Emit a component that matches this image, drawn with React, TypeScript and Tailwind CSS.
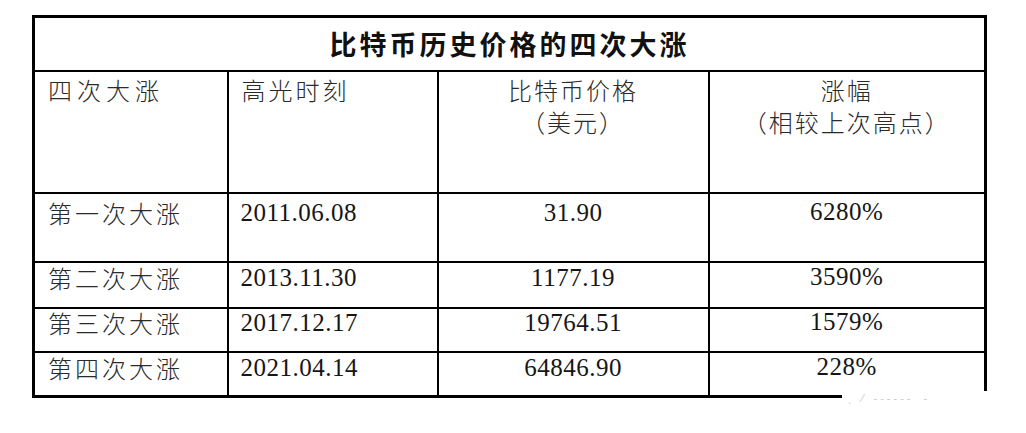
import React from 'react';

const rows = [
  { name: '第一次大涨', date: '2011.06.08', price: '31.90', rise: '6280%', h: 'h-[69px]', pt: 'pt-[6px]' },
  { name: '第二次大涨', date: '2013.11.30', price: '1177.19', rise: '3590%', h: 'h-[46px]', pt: 'pt-[2px]' },
  { name: '第三次大涨', date: '2017.12.17', price: '19764.51', rise: '1579%', h: 'h-[44px]', pt: 'pt-[1px]' },
  { name: '第四次大涨', date: '2021.04.14', price: '64846.90', rise: '228%', h: 'h-[45px]', pt: 'pt-[2px]' },
];

const cn = "font-['Noto_Sans_CJK_SC',sans-serif] font-light text-[#2a2a2a]";
const num = "font-['Liberation_Serif',serif] text-[#161616] tracking-[0.5px]";

export default function App() {
  return (
    <div className="w-[1026px] h-[433px] bg-white pl-[32px] pt-[15px] relative">
      <table className="w-[952px] border-collapse border-[3px] border-black table-fixed">
        <colgroup>
          <col className="w-[194px]" />
          <col className="w-[210px]" />
          <col className="w-[271px]" />
          <col className="w-[277px]" />
        </colgroup>
        <tbody>
          <tr className="h-[54px]">
            <td
              colSpan={4}
              className="border-[2.5px] border-black text-center align-middle font-['Noto_Sans_CJK_SC',sans-serif] font-bold text-[27px] leading-none tracking-[3px] text-[#111]"
            >
              比特币历史价格的四次大涨
            </td>
          </tr>
          <tr className="h-[122px]">
            <td className={`border-[2.5px] border-black align-top pl-[13px] pt-[2px] text-[24px] leading-[32px] tracking-[5px] ${cn}`}>
              四次大涨
            </td>
            <td className={`border-[2.5px] border-black align-top pl-[13px] pt-[2px] text-[24px] leading-[32px] tracking-[3px] ${cn}`}>
              高光时刻
            </td>
            <td className={`border-[2.5px] border-black align-top text-center pt-[2px] text-[24px] leading-[32px] tracking-[2px] ${cn}`}>
              <div>比特币价格</div>
              <div>（美元）</div>
            </td>
            <td className={`border-[2.5px] border-black align-top text-center pt-[2px] text-[24px] leading-[32px] tracking-[2px] ${cn}`}>
              <div>涨幅</div>
              <div>（相较上次高点）</div>
            </td>
          </tr>
          {rows.map((r) => (
            <tr key={r.date} className={r.h}>
              <td className={`border-[2.5px] border-black align-top pl-[13px] ${r.pt} text-[24px] leading-[26px] tracking-[3px] ${cn}`}>
                {r.name}
              </td>
              <td className={`border-[2.5px] border-black align-top pl-[12px] ${r.pt} text-[25px] leading-[26px] ${num}`}>
                {r.date}
              </td>
              <td className={`border-[2.5px] border-black align-top text-center ${r.pt} text-[25px] leading-[26px] ${num}`}>
                {r.price}
              </td>
              <td className={`border-[2.5px] border-black align-top text-center ${r.pt} text-[25px] leading-[24px] ${num}`}>
                {r.rise}
              </td>
            </tr>
          ))}
        </tbody>
      </table>
      {/* faint watermark over the bottom-right corner */}
      <div className="absolute left-[842px] top-[391px] w-[150px] h-[14px] bg-white flex items-center gap-[10px] pl-[6px] text-[11px] text-[#c8c8c8] font-['Liberation_Sans',sans-serif]">
        <span>ˎ</span>
        <span>⁄</span>
        <span className="tracking-[3px]">‐‐‐‐‐‐</span>
        <span>-</span>
      </div>
    </div>
  );
}
